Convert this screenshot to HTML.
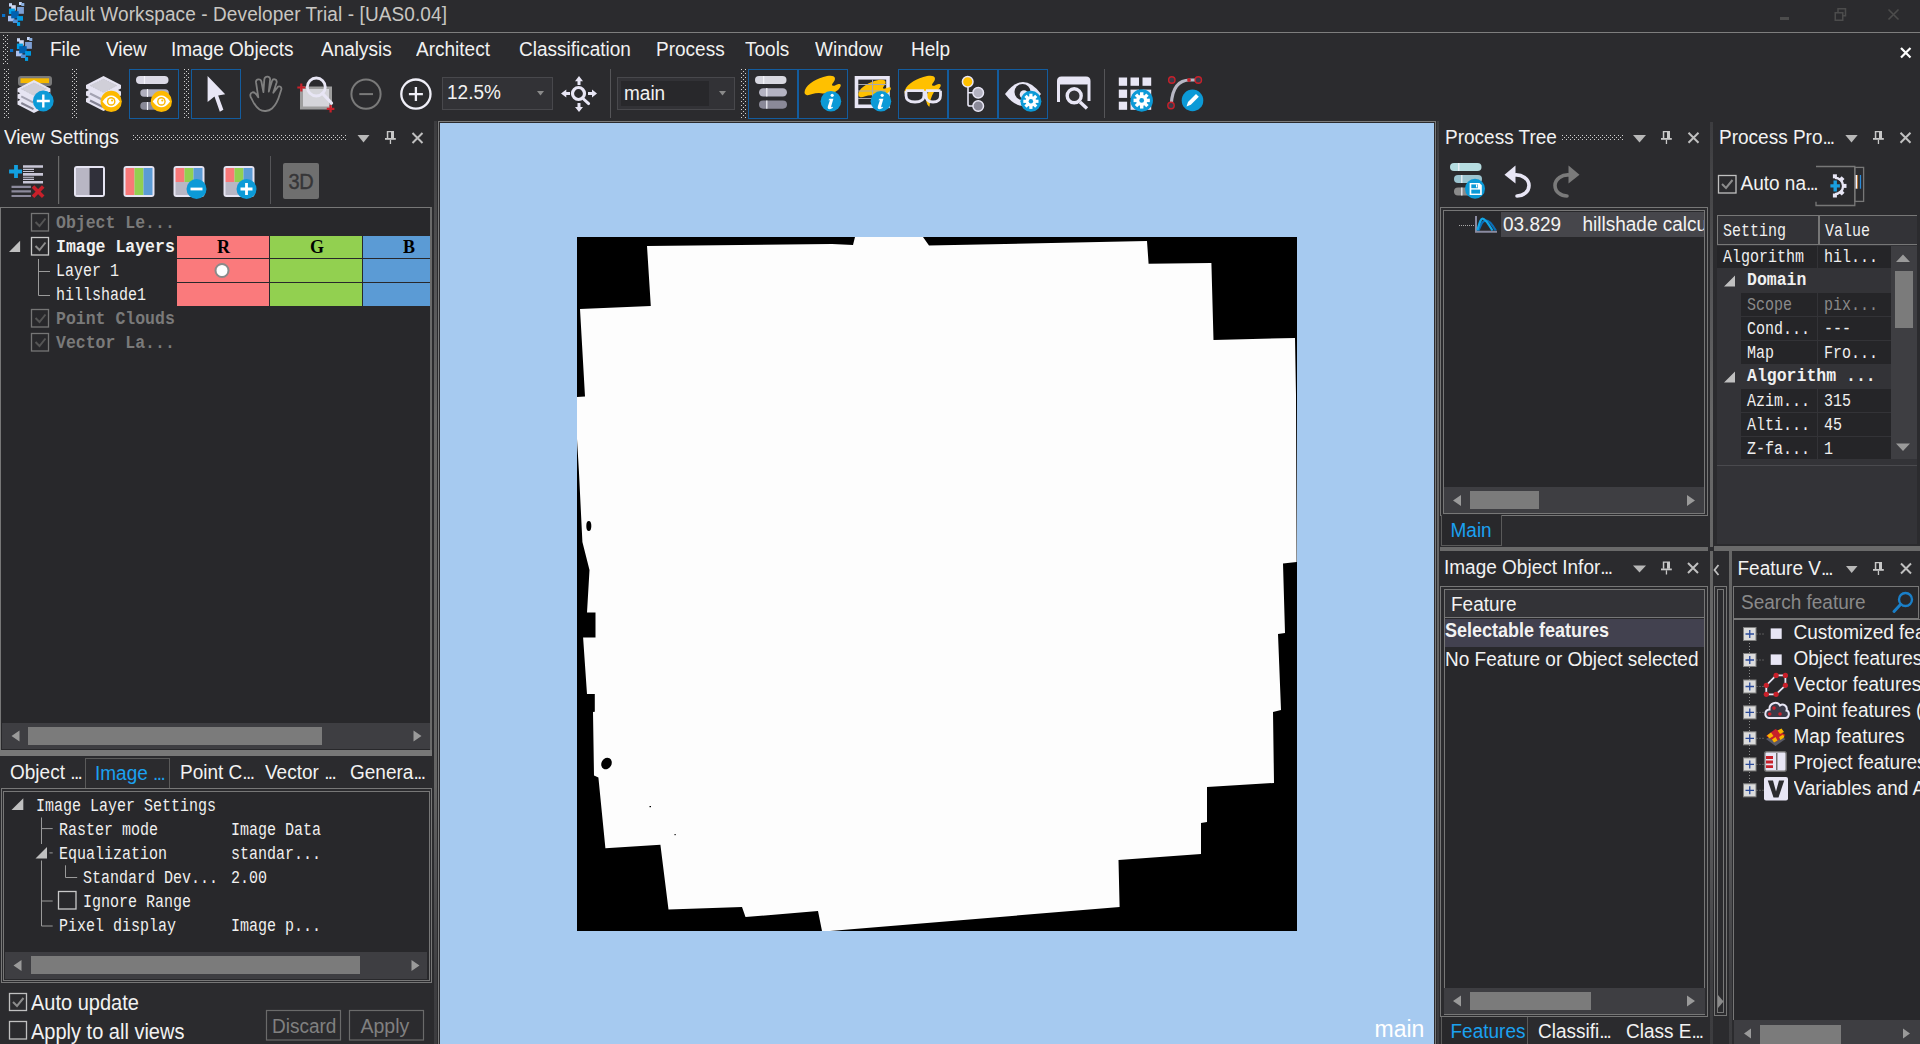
<!DOCTYPE html>
<html><head><meta charset="utf-8">
<style>
*{margin:0;padding:0;box-sizing:border-box}
html,body{width:1920px;height:1044px;overflow:hidden;background:#2b2b2e}
body{position:relative;font-family:"Liberation Sans",sans-serif;color:#f2f2f2}
.a{position:absolute}
svg{position:absolute;overflow:visible}
.t{position:absolute;font-size:19px;line-height:19px;white-space:nowrap;color:#f2f2f2;transform:scaleY(1.08);transform-origin:0 84.67%}
.mo{position:absolute;font-family:"Liberation Mono",monospace;font-size:16.5px;line-height:16.5px;white-space:nowrap;color:#f0f0f0;transform:translateY(1.5px) scale(0.909,1.1);transform-origin:0 76.6%}
.bx{position:absolute;border:1px solid #757575}
.grip{position:absolute;background-image:radial-gradient(circle at 1px 1px,#8c8c8c 0.9px,transparent 1px);background-size:3px 3px}
.sbt{position:absolute;background:#3e3e42}
.thumb{position:absolute;background:#7b7b7b}
.tb{position:absolute;border:1px solid #135c9e}
.vs{position:absolute;background-image:linear-gradient(to bottom,#3c3c3f 0%,#4a4a4c 10%,#555557 18%,#686868 32%,#646464 72%,#555557 80%,#3e3e41 93%,#3c3c3f 100%);background-size:100% 923px;background-repeat:no-repeat}
.el{letter-spacing:-1.6px}

</style></head><body>
<svg style="left:0;top:0" width="0" height="0"><defs><pattern id="gp" width="4" height="4" patternUnits="userSpaceOnUse"><rect x="0" y="0" width="1" height="1" fill="#d4d4d4"/><rect x="2" y="2" width="1" height="1" fill="#d4d4d4"/></pattern></defs></svg>
<svg style="left:3px;top:35px" width="5" height="29"><rect width="5" height="29" fill="url(#gp)"/></svg>
<svg style="left:4px;top:69px" width="5" height="49"><rect width="5" height="49" fill="url(#gp)"/></svg>
<svg style="left:72px;top:69px" width="5" height="49"><rect width="5" height="49" fill="url(#gp)"/></svg>
<svg style="left:184px;top:69px" width="5" height="49"><rect width="5" height="49" fill="url(#gp)"/></svg>
<svg style="left:741px;top:69px" width="5" height="49"><rect width="5" height="49" fill="url(#gp)"/></svg>
<svg style="left:133px;top:135px" width="213" height="5"><rect width="213" height="5" fill="url(#gp)"/></svg>
<svg style="left:1562px;top:135px" width="61" height="5"><rect width="61" height="5" fill="url(#gp)"/></svg>
<!-- TITLE BAR -->
<svg style="left:0;top:0" width="30" height="30">
 <rect x="2" y="14" width="3.2" height="3" fill="#0a70c8"/>
 <rect x="9" y="3.2" width="3" height="3.4" fill="#c8d8f8"/><rect x="11.2" y="5.2" width="4.6" height="5.4" fill="#d0d8f0"/>
 <rect x="19" y="2" width="2.8" height="3" fill="#c8d8f8"/><rect x="21.3" y="3" width="3" height="3" fill="#88aee0"/>
 <rect x="17.1" y="7" width="6.8" height="6.8" fill="#7ea0d6"/>
 <rect x="8.9" y="8.6" width="6" height="5.5" fill="#00a0e8"/>
 <rect x="8" y="15.8" width="6.4" height="5.5" fill="#a8c0f0"/>
 <rect x="11.2" y="11.2" width="7.5" height="7.2" fill="#0060b0"/>
 <rect x="17.1" y="16.1" width="5.9" height="4.6" fill="#0098e0"/>
 <rect x="12.9" y="19.5" width="4.9" height="3.5" fill="#5090d8"/>
 <rect x="17" y="22.1" width="3.1" height="3.8" fill="#00a0e8"/>
</svg>
<div class="t" style="left:34px;top:5px;color:#c8c6c2;letter-spacing:0.1px">Default Workspace - Developer Trial - [UAS0.04]</div>
<div class="a" style="left:1780px;top:17px;width:9px;height:3px;background:#4c4c4c"></div>
<svg style="left:1830px;top:4px" width="24" height="22"><rect x="8" y="4.75" width="7.5" height="7" fill="none" stroke="#4c4c4c" stroke-width="1.5"/><rect x="5.25" y="8.75" width="7.5" height="7.5" fill="#2b2b2e" stroke="#4c4c4c" stroke-width="1.5"/></svg>
<svg style="left:1884px;top:5px" width="20" height="20"><path d="M4.5 4.5 L14.5 14.5 M14.5 4.5 L4.5 14.5" stroke="#4c4c4c" stroke-width="1.6"/></svg>
<div class="a" style="left:0;top:32px;width:1920px;height:1px;background:#7e7e7e"></div>

<!-- MENU BAR -->
<svg style="left:8px;top:35px" width="30" height="30">
 <rect x="2" y="14" width="3.2" height="3" fill="#0a70c8"/>
 <rect x="9" y="3.2" width="3" height="3.4" fill="#c8d8f8"/><rect x="11.2" y="5.2" width="4.6" height="5.4" fill="#d0d8f0"/>
 <rect x="19" y="2" width="2.8" height="3" fill="#c8d8f8"/><rect x="21.3" y="3" width="3" height="3" fill="#88aee0"/>
 <rect x="17.1" y="7" width="6.8" height="6.8" fill="#7ea0d6"/>
 <rect x="8.9" y="8.6" width="6" height="5.5" fill="#00a0e8"/>
 <rect x="8" y="15.8" width="6.4" height="5.5" fill="#a8c0f0"/>
 <rect x="11.2" y="11.2" width="7.5" height="7.2" fill="#0060b0"/>
 <rect x="17.1" y="16.1" width="5.9" height="4.6" fill="#0098e0"/>
 <rect x="12.9" y="19.5" width="4.9" height="3.5" fill="#5090d8"/>
 <rect x="17" y="22.1" width="3.1" height="3.8" fill="#00a0e8"/>
</svg>
<div class="t" style="left:50px;top:40px">File</div>
<div class="t" style="left:106px;top:40px">View</div>
<div class="t" style="left:171px;top:40px">Image Objects</div>
<div class="t" style="left:321px;top:40px">Analysis</div>
<div class="t" style="left:416px;top:40px">Architect</div>
<div class="t" style="left:519px;top:40px">Classification</div>
<div class="t" style="left:656px;top:40px">Process</div>
<div class="t" style="left:745px;top:40px">Tools</div>
<div class="t" style="left:815px;top:40px">Window</div>
<div class="t" style="left:911px;top:40px">Help</div>
<svg style="left:1896px;top:43px" width="20" height="20"><path d="M5 5 L14.5 14.5 M14.5 5 L5 14.5" stroke="#ffffff" stroke-width="2.2"/></svg>
<!-- TOOLBAR -->
<div class="tb" style="left:129px;top:69px;width:50px;height:50px"></div>
<div class="tb" style="left:191px;top:69px;width:50px;height:50px"></div>
<div class="tb" style="left:748px;top:69px;width:50px;height:50px"></div>
<div class="tb" style="left:798px;top:69px;width:50px;height:50px"></div>
<div class="tb" style="left:898px;top:69px;width:50px;height:50px"></div>
<div class="tb" style="left:948px;top:69px;width:50px;height:50px"></div>
<div class="tb" style="left:998px;top:69px;width:50px;height:50px"></div>
<div class="a" style="left:610px;top:69px;width:1px;height:49px;background:#555558"></div>
<div class="a" style="left:1104px;top:69px;width:1px;height:49px;background:#555558"></div>
<!-- zoom combo -->
<div class="a" style="left:442px;top:77px;width:111px;height:33px;border:1px solid #48484c;background:#323236"></div>
<div class="t" style="left:447px;top:83px;font-size:19px">12.5%</div>
<svg style="left:534px;top:89px" width="12" height="8"><path d="M3 2 L10 2 L6.5 6.5Z" fill="#8a8a8a"/></svg>
<!-- main combo -->
<div class="a" style="left:617px;top:77px;width:118px;height:33px;border:1px solid #48484c;background:#323236"></div>
<div class="a" style="left:621px;top:81px;width:88px;height:25px;background:#28282b"></div>
<div class="t" style="left:624px;top:84px;font-size:19px">main</div>
<svg style="left:716px;top:89px" width="12" height="8"><path d="M3 2 L10 2 L6.5 6.5Z" fill="#8a8a8a"/></svg>
<!-- toolbar icons -->
<svg style="left:0;top:0" width="1220" height="125">
 <defs>
  <g id="stack">
   <path d="M0 15 L17.5 6 L35 15 L35 19 L17.5 28 L0 19Z" fill="#e6e4f2"/>
   <path d="M3 17 L17.5 10 L32 17 L17.5 24Z" fill="#9d9ca8"/>
   <path d="M0 9 L17.5 0 L35 9 L35 13 L17.5 22 L0 13Z" fill="#e6e4f2" transform="translate(0,0)"/>
  </g>
  <g id="eyeb">
   <circle cx="0" cy="0" r="10.6" fill="#fdb900"/>
   <path d="M-8.7 0 Q0 -11.8 8.7 0 Q0 11.8 -8.7 0Z" fill="#fff"/>
   <circle cx="0" cy="0" r="4.3" fill="#fdb900"/><circle cx="0" cy="0" r="2.9" fill="#fff"/><circle cx="0.9" cy="-0.9" r="1.1" fill="#fdb900"/>
  </g>
  <g id="infob">
   <circle cx="0" cy="0" r="10.3" fill="#0c9ad7"/>
   <circle cx="1.3" cy="-6" r="1.6" fill="#fff"/>
   <path d="M-1.5 -2.5 L2.5 -2.5 L0.3 5 Q0 6.5 2 5.5 L1.8 6.8 Q-1 8.5 -2.8 7.5 Q-3.5 6.5 -3 5 L-1 -1 L-2.5 -1Z" fill="#fff"/>
  </g>
  <g id="gearb">
   <circle cx="0" cy="0" r="10.5" fill="#0c9ad7"/>
   <g fill="#fff"><circle r="5.2"/>
    <rect x="-1.6" y="-7.6" width="3.2" height="15.2"/><rect x="-1.6" y="-7.6" width="3.2" height="15.2" transform="rotate(45)"/>
    <rect x="-1.6" y="-7.6" width="3.2" height="15.2" transform="rotate(90)"/><rect x="-1.6" y="-7.6" width="3.2" height="15.2" transform="rotate(135)"/>
   </g>
   <circle r="2.2" fill="#0c9ad7"/>
  </g>
  <path id="blob" d="M0 14 C2 8 12 2 22 0 C30 -1.5 32 2 28 7 C26 9 27 11 31 9 C37 6 37 10 33 14 C28 18 22 18 14 17 C8 17 4 20 1.5 19 C-1 18 -0.5 16 0 14Z"/>
 </defs>
 <!-- icon1 new project -->
 <rect x="18" y="76" width="34" height="10" rx="3" fill="#7a7a7a"/>
 <rect x="20.5" y="78.3" width="28.5" height="4.8" fill="#f5b800"/>
 <g transform="translate(17.5,80) scale(0.94)">
  <path d="M0 9 L17.5 0 L35 9 L35 26 L17.5 35 L0 26Z" fill="#e6e4f2"/>
  <path d="M0 12.5 L3 14 L0 15.5Z M35 12.5 L32 14 L35 15.5Z M0 19.5 L3 21 L0 22.5Z M35 19.5 L32 21 L35 22.5Z" fill="#2b2b2e"/>
  <path d="M4 17.5 L17 24" stroke="#a4a3b2" stroke-width="2.2"/>
  <path d="M4 24.5 L17 31" stroke="#858494" stroke-width="2.2"/>
  <path d="M4 9.5 L17.5 3 L31 9.5 L17.5 16.5Z" fill="#d0cfd8" stroke="#b8b7c4" stroke-width="0.6" stroke-dasharray="1 1"/>
 </g>
 <circle cx="43.3" cy="101" r="10.4" fill="#0c9ad7"/>
 <path d="M43.3 94.5 V107.5 M36.8 101 H49.8" stroke="#fff" stroke-width="2.4"/>
 <!-- icon2 layers eye -->
 <g transform="translate(86,76)">
  <path d="M0 9 L17.5 0 L35 9 L35 26 L17.5 35 L0 26Z" fill="#e6e4f2"/>
  <path d="M0 12.5 L3 14 L0 15.5Z M35 12.5 L32 14 L35 15.5Z M0 19.5 L3 21 L0 22.5Z M35 19.5 L32 21 L35 22.5Z" fill="#2b2b2e"/>
  <path d="M4 17.5 L17 24" stroke="#a4a3b2" stroke-width="2.2"/>
  <path d="M4 24.5 L17 31" stroke="#858494" stroke-width="2.2"/>
  <path d="M4 9.5 L17.5 3 L31 9.5 L17.5 16.5Z" fill="#d0cfd8" stroke="#b8b7c4" stroke-width="0.6" stroke-dasharray="1 1"/>
 </g>
 <use href="#eyeb" x="111.2" y="101.4"/>
 <!-- icon3 process tree eye -->
 <rect x="136" y="76" width="32.5" height="8" rx="4" fill="#dcdae6"/>
 <rect x="140.3" y="89.2" width="28.5" height="7.5" rx="3.7" fill="#b0afbe"/>
 <rect x="140.3" y="102" width="28.5" height="7.8" rx="3.8" fill="#888896"/>
 <path d="M144.5 76 V84 M147.5 89 V97 M147.5 102 V110" stroke="#f4f4fa" stroke-width="1.2"/>
 <use href="#eyeb" x="161.4" y="101.4"/>
 <!-- pointer -->
 <path d="M207.6 76 L207.6 102 L214.5 96.5 L219.8 111.7 L223.4 109.8 L218.2 95.4 L225.2 94.2Z" fill="#e8e6f5"/>
 <!-- hand -->
 <path d="M258.3 97.3 C256.5 94 254.5 92 252.5 92.3 C249.5 93 250 96.5 251.5 98.5 C253 102 256 107 259.5 109.5 C263 111.8 268.5 111.5 272 108.5 C276 105 278.5 99 280 93.5 L281.3 89.5 C282 86.5 278.5 85 277 88 L273.3 92.8 L276.6 82.5 C277.3 79.2 273 78 272 81 L268.8 91.6 L270.1 79.5 C270.4 76 264.8 75.6 264.3 79.5 L263.4 92.1 L261.4 81.5 C260.8 78.5 255.6 78.5 256 82.2 Z" fill="none" stroke="#808080" stroke-width="1.8" stroke-linejoin="round"/>
 <!-- zoom rect -->
 <rect x="300" y="86.5" width="32" height="23" fill="#9e9e9e"/>
 <rect x="303" y="89" width="26" height="17.5" fill="#d5d5da"/>
 <circle cx="316.3" cy="87" r="9" fill="#2b2b2e" fill-opacity="0" stroke="#e8e6f5" stroke-width="2.8"/>
 <path d="M322.5 93.5 L331.5 103" stroke="#e8e6f5" stroke-width="3.2" stroke-linecap="round"/>
 <path d="M301.3 83.5 V91.5 M297.3 87.5 H305.3 M330.6 105 V112.5 M326.8 108.8 H334.4" stroke="#c8202a" stroke-width="2.2"/>
 <!-- minus circle -->
 <circle cx="366" cy="94.1" r="14.6" fill="none" stroke="#7a7a7a" stroke-width="2"/>
 <path d="M359.3 94.1 H373" stroke="#7a7a7a" stroke-width="2"/>
 <!-- plus circle -->
 <circle cx="415.9" cy="94.1" r="14.6" fill="none" stroke="#f0eff8" stroke-width="2.3"/>
 <path d="M408.9 94.1 H422.9 M415.9 87.1 V101.1" stroke="#f0eff8" stroke-width="2.3"/>
 <!-- pan zoom -->
 <circle cx="578.5" cy="93.5" r="6" fill="none" stroke="#e8e6f5" stroke-width="3.2"/>
 <path d="M583.5 99 L588.6 103.6" stroke="#e8e6f5" stroke-width="3" stroke-linecap="round"/>
 <path d="M579 76 L583 81.3 L575 81.3Z M579 112 L583 107 L575 107Z M561 93.5 L566.3 89.5 L566.3 97.5Z M597 93.5 L592 89.5 L592 97.5Z" fill="#e8e6f5"/>
 <path d="M579 81 V85 M579 103 V107.5 M566 93.5 H570 M588 93.5 H592.5" stroke="#e8e6f5" stroke-width="3"/>
 <!-- tb icon: process tree -->
 <rect x="755" y="76" width="31.5" height="8" rx="4" fill="#d8d8e0"/>
 <rect x="759" y="88.2" width="28" height="8.4" rx="4.2" fill="#b4b3c2"/>
 <rect x="759" y="100.5" width="28" height="8.2" rx="4.1" fill="#8a8998"/>
 <path d="M763.7 76 V84 M766.8 88 V96.6 M766.8 100.5 V108.7" stroke="#f4f4fa" stroke-width="1.2"/>
 <!-- blob info -->
 <use href="#blob" x="805" y="76" fill="#ffc000"/>
 <use href="#infob" x="830.9" y="101.3"/>
 <!-- table blob info -->
 <rect x="856.5" y="77.8" width="31.5" height="28.5" fill="none" stroke="#e8e6f5" stroke-width="3.6"/>
 <use href="#blob" x="858.5" y="80" fill="#ffc000" transform="translate(86,8) scale(0.9)" />
 <path d="M858 84.5 H886 M858 91 H886 M858 98.5 H886 M872.5 79.5 V105" stroke="#a8a8b0" stroke-width="1"/>
 <use href="#infob" x="880.9" y="101.3"/>
 <!-- glasses -->
 <use href="#blob" x="905" y="76" fill="#ffc000"/>
 <path d="M907 92 H923 V95.5 C923 99.5 920.5 100.5 915 100.5 C909.5 100.5 907 99.5 907 95.5Z" fill="#2b2b2e"/>
 <path d="M927 92 H939.5 V95.5 C939.5 99.5 937 100.5 933 100.5 C929 100.5 927 99.5 927 95.5Z" fill="#2b2b2e"/>
 <path d="M934 92 C931 97 930 101 929.5 106.7 C927.5 106 926 102 926 98 C926 95 928 92 930 90Z" fill="#ffc000"/>
 <path d="M906 90.7 H924 M926 90.7 H940.5 M906 90.7 V95.5 C906 100.5 909.5 102 915 102 C920.5 102 924 100.5 924 95.5 V90.7 M926 90.7 V95.5 C926 100.5 929 102 933 102 C937.5 102 940.5 100.5 940.5 95.5 V90.7" fill="none" stroke="#e8e6f5" stroke-width="2.8"/>
 <!-- tree nodes -->
 <path d="M968 87 V104.5 Q968 106 970 106 H974 M968 92.7 H973" fill="none" stroke="#e8e6f5" stroke-width="1.6"/>
 <circle cx="967.7" cy="81.7" r="5.3" fill="#ffc000" stroke="#e8e6f5" stroke-width="1.5"/>
 <circle cx="978.2" cy="92.7" r="5.3" fill="#b4b3c2" stroke="#e8e6f5" stroke-width="1.5"/>
 <circle cx="978.2" cy="106" r="5.3" fill="#8a8998" stroke="#e8e6f5" stroke-width="1.5"/>
 <!-- eye gear -->
 <path d="M1005 94 Q1023 70 1041 94 Q1023 118 1005 94Z" fill="#e8e6f5"/>
 <circle cx="1022.5" cy="92" r="8" fill="#2b2b2e"/>
 <circle cx="1024" cy="94.5" r="4.3" fill="#e8e6f5"/>
 <use href="#gearb" x="1030.9" y="101.3"/>
 <!-- window magnifier -->
 <path d="M1058.5 102 V81 Q1058.5 78 1061.5 78 H1086 Q1089 78 1089 81 V101" fill="none" stroke="#e8e6f5" stroke-width="3"/>
 <rect x="1058" y="78" width="31" height="6.5" rx="2" fill="#e8e6f5"/>
 <circle cx="1074.2" cy="95.8" r="8.6" fill="#2b2b2e"/>
 <circle cx="1074.2" cy="95.8" r="7" fill="#333336" stroke="#e8e6f5" stroke-width="3.4"/>
 <path d="M1080 102 L1087 108.5" stroke="#e8e6f5" stroke-width="3.4"/>
 <!-- grid gear -->
 <g fill="#e8e6f5">
  <rect x="1118.8" y="77.5" width="8.3" height="8.3"/><rect x="1130.5" y="77.5" width="8.5" height="8.3"/><rect x="1142.5" y="77.5" width="8.7" height="8.3"/>
  <rect x="1118.8" y="89.6" width="8.3" height="8.3"/><rect x="1130.5" y="89.6" width="8.5" height="8.3"/><rect x="1142.5" y="89.6" width="8.7" height="8.3"/>
  <rect x="1118.8" y="101.7" width="8.3" height="8.1"/><rect x="1130.5" y="101.7" width="8.5" height="8.1"/><rect x="1142.5" y="101.7" width="8.7" height="8.1"/>
 </g>
 <g transform="translate(1141.7,100.4) scale(1.07)"><use href="#gearb"/></g>
 <!-- curve pen -->
 <path d="M1171.3 104 C1172 92 1176 80 1190 80 H1197" fill="none" stroke="#b8b7c4" stroke-width="3.2"/>
 <circle cx="1171.8" cy="80" r="3.2" fill="#3a3a48" stroke="#c8202a" stroke-width="1.4"/>
 <circle cx="1198.3" cy="80" r="3.2" fill="#3a3a48" stroke="#c8202a" stroke-width="1.4"/>
 <circle cx="1171" cy="105.5" r="3.2" fill="#3a3a48" stroke="#c8202a" stroke-width="1.4"/>
 <circle cx="1189" cy="80" r="1.9" fill="#c8202a"/>
 <circle cx="1192.5" cy="100.4" r="10.8" fill="#0c9ad7"/>
 <path d="M1186.5 106.5 L1188 102 L1196 94 L1198.8 96.8 L1190.8 104.8Z" fill="#fff"/>
</svg>
<!-- LEFT PANEL: VIEW SETTINGS -->
<div class="vs" style="left:434px;top:121px;width:3px;height:923px;background-position:0 0px"></div>
<div class="t" style="left:4px;top:128px">View Settings</div>
<svg style="left:0;top:120px" width="440" height="90">
 <path d="M357.5 15 H369.5 L363.5 22.5Z" fill="#b8b8b8"/>
 <g transform="translate(385,11)" fill="#c8c8c8"><path d="M1.8 0 H9 V7.2 H1.8Z M3.3 1.3 V7.2 H6 V1.3Z" fill-rule="evenodd"/><rect x="0" y="7" width="10.8" height="1.8"/><rect x="4.8" y="8.8" width="1.3" height="4.2"/></g>
 <path d="M412.5 13 L422.5 23 M422.5 13 L412.5 23" stroke="#c0c0c0" stroke-width="2"/>
 <!-- add/remove icon -->
 <path d="M16 45 V58 M9.1 51.5 H22" stroke="#12a0e0" stroke-width="3.8"/>
 <path d="M23 46.5 H43 M23 54.4 H43 M23 62.3 H43" stroke="#c8c6d6" stroke-width="2.6"/>
 <path d="M23 49.4 H34 M23 51.5 H34 M23 57.3 H34 M23 59.4 H34" stroke="#c8c6d6" stroke-width="1.1"/>
 <path d="M11.5 66.8 H30.9 M11.5 71.4 H30.9 M11.5 76 H30.9" stroke="#8c8a9c" stroke-width="2.2"/>
 <path d="M33 66.6 L43.2 76.8 M43.2 66.6 L33 76.8" stroke="#c8202a" stroke-width="3.6"/>
 <rect x="58" y="36" width="1.2" height="48" fill="#6a6a6a"/>
 <rect x="270" y="36" width="1" height="48" fill="#555558"/>
 <!-- icon 2 bw -->
 <rect x="74" y="46" width="31" height="31" rx="3" fill="#e6e4f2"/>
 <rect x="76" y="48" width="13.5" height="27" fill="#b8b6c4"/><rect x="89.5" y="48" width="13.5" height="27" fill="#30303a"/>
 <!-- icon 3 rgb -->
 <rect x="123.5" y="46" width="31" height="31" rx="3" fill="#e6e4f2"/>
 <rect x="125.5" y="48" width="9" height="27" fill="#f87878"/><rect x="134.5" y="48" width="9" height="27" fill="#92d050"/><rect x="143.5" y="48" width="9" height="27" fill="#5b9bd5"/>
 <!-- icon 4 rgb minus -->
 <rect x="173.5" y="46" width="31" height="31" rx="3" fill="#e6e4f2"/>
 <rect x="175.5" y="48" width="9" height="14" fill="#f87878"/><rect x="184.5" y="48" width="9" height="14" fill="#92d050"/><rect x="193.5" y="48" width="9" height="14" fill="#5b9bd5"/>
 <rect x="175.5" y="62" width="27" height="13" fill="#b8b6c4"/>
 <circle cx="196.5" cy="69" r="10" fill="#0c9ad7"/><path d="M190.5 69 H202.5" stroke="#fff" stroke-width="2.8"/>
 <!-- icon 5 rgb plus -->
 <rect x="223.5" y="46" width="31" height="31" rx="3" fill="#e6e4f2"/>
 <rect x="225.5" y="48" width="9" height="14" fill="#f87878"/><rect x="234.5" y="48" width="9" height="14" fill="#92d050"/><rect x="243.5" y="48" width="9" height="14" fill="#5b9bd5"/>
 <rect x="225.5" y="62" width="27" height="13" fill="#b8b6c4"/>
 <circle cx="246.5" cy="69" r="10" fill="#0c9ad7"/><path d="M240.5 69 H252.5 M246.5 63 V75" stroke="#fff" stroke-width="2.8"/>
 <!-- 3D -->
 <rect x="283" y="43" width="36" height="36" rx="2" fill="#6f6f6f"/>
</svg>
<div class="t" style="left:288.5px;top:172px;font-size:20px;line-height:20px;color:#363638;letter-spacing:-0.3px;-webkit-text-stroke:0.4px #363638">3D</div>

<!-- tree -->
<div class="a" style="left:0;top:207px;width:432px;height:544px;border:1.5px solid #777;border-right:2px solid #6a6a6a;background:#28282b"></div>
<!-- RGB cells -->
<div class="a" style="left:177px;top:236px;width:92px;height:22px;background:#fa7a7c"></div>
<div class="a" style="left:270px;top:236px;width:92px;height:22px;background:#92d050"></div>
<div class="a" style="left:363px;top:236px;width:67px;height:22px;background:#5b9bd5"></div>
<div class="a" style="left:177px;top:259px;width:92px;height:23px;background:#fa7a7c"></div>
<div class="a" style="left:270px;top:259px;width:92px;height:23px;background:#92d050"></div>
<div class="a" style="left:363px;top:259px;width:67px;height:23px;background:#5b9bd5"></div>
<div class="a" style="left:177px;top:283px;width:92px;height:23px;background:#fa7a7c"></div>
<div class="a" style="left:270px;top:283px;width:92px;height:23px;background:#92d050"></div>
<div class="a" style="left:363px;top:283px;width:67px;height:23px;background:#5b9bd5"></div>
<div class="t" style="left:217px;top:238px;font-family:'Liberation Serif';font-weight:bold;font-size:18px;line-height:18px;color:#000">R</div>
<div class="t" style="left:310px;top:238px;font-family:'Liberation Serif';font-weight:bold;font-size:18px;line-height:18px;color:#000">G</div>
<div class="t" style="left:403px;top:238px;font-family:'Liberation Serif';font-weight:bold;font-size:18px;line-height:18px;color:#000">B</div>
<svg style="left:0;top:200px" width="440" height="160">
 <circle cx="222" cy="70.5" r="6.5" fill="#fff" stroke="#8a8a8a" stroke-width="2"/>
 <!-- checkboxes -->
 <rect x="31.5" y="13.5" width="17" height="17.5" fill="none" stroke="#757575" stroke-width="1.3"/>
 <path d="M35.5 22 L39.5 26 L45.5 18.5" fill="none" stroke="#555" stroke-width="2"/>
 <rect x="31.5" y="37.5" width="17" height="17.5" fill="none" stroke="#c8c8c8" stroke-width="1.3"/>
 <path d="M35.5 46 L39.5 50 L45.5 42.5" fill="none" stroke="#8c8c8c" stroke-width="2"/>
 <rect x="31.5" y="109.5" width="17" height="17.5" fill="none" stroke="#757575" stroke-width="1.3"/>
 <path d="M35.5 118 L39.5 122 L45.5 114.5" fill="none" stroke="#555" stroke-width="2"/>
 <rect x="31.5" y="133.5" width="17" height="17.5" fill="none" stroke="#757575" stroke-width="1.3"/>
 <path d="M35.5 142 L39.5 146 L45.5 138.5" fill="none" stroke="#555" stroke-width="2"/>
 <path d="M9 52 H20.1 V40.8Z" fill="#c0c0c0"/>
 <path d="M38.5 59 V95.5 H50 M38.5 71.5 H50" fill="none" stroke="#9a9a9a" stroke-width="1"/>
</svg>
<div class="mo" style="left:56px;top:215px;color:#7a7a7a;font-weight:bold;transform:translateY(1.5px) scaleY(1.1)">Object Le...</div>
<div class="mo" style="left:56px;top:239px;font-weight:bold;transform:translateY(1.5px) scaleY(1.1)">Image Layers</div>
<div class="mo" style="left:56px;top:263px">Layer 1</div>
<div class="mo" style="left:56px;top:287px">hillshade1</div>
<div class="mo" style="left:56px;top:311px;color:#7a7a7a;font-weight:bold;transform:translateY(1.5px) scaleY(1.1)">Point Clouds</div>
<div class="mo" style="left:56px;top:335px;color:#7a7a7a;font-weight:bold;transform:translateY(1.5px) scaleY(1.1)">Vector La...</div>
<!-- tree h scrollbar -->
<div class="sbt" style="left:2px;top:723px;width:428px;height:26px"></div>
<div class="thumb" style="left:28px;top:727px;width:294px;height:18px"></div>
<svg style="left:0;top:720px" width="440" height="32"><path d="M11.5 16 L19.5 10.5 V21.5Z M421.5 16 L413.5 10.5 V21.5Z" fill="#9a9a9a"/></svg>
<!-- splitter -->
<div class="a" style="left:0;top:750px;width:432px;height:6px;background:#787878"></div>
<!-- tabs -->
<div class="a" style="left:85px;top:758px;width:85px;height:31px;border:1px solid #5a5a5a;border-bottom:none;background:#2b2b2e"></div>
<div class="t" style="left:10px;top:763px">Object <span class="el">...</span></div>
<div class="t" style="left:95px;top:764px;color:#1ba1f0">Image <span class="el">...</span></div>
<div class="t" style="left:180px;top:763px">Point C<span class="el">...</span></div>
<div class="t" style="left:265px;top:763px">Vector <span class="el">...</span></div>
<div class="t" style="left:350px;top:763px">Genera<span class="el">...</span></div>
<!-- properties box -->
<div class="a" style="left:1px;top:788px;width:431px;height:195px;border:1.5px solid #777777;background:#2b2b2e"></div>
<div class="a" style="left:3px;top:790.5px;width:427px;height:190.5px;border:1.5px solid #777777;background:#28282b"></div>
<svg style="left:0;top:780px" width="440" height="160">
 <path d="M11.5 30 H23.3 V18.2Z" fill="#c0c0c0"/>
 <path d="M41.5 37.5 V64 M41.5 48.6 H52.7 M41.5 80.5 V146 H52.7 M41.5 121 H52.7" fill="none" stroke="#9a9a9a" stroke-width="1"/>
 <path d="M35.5 78.5 H47 V67Z" fill="#c0c0c0"/><path d="M49.4 72.9 H52.7" stroke="#9a9a9a" stroke-width="1"/>
 <path d="M65.5 85.3 V97.5 H77.2" fill="none" stroke="#9a9a9a" stroke-width="1"/>
 <rect x="58.5" y="111.5" width="17.5" height="17.5" fill="none" stroke="#c8c8c8" stroke-width="1.3"/>
</svg>
<div class="mo" style="left:36px;top:798px">Image Layer Settings</div>
<div class="mo" style="left:59px;top:822px">Raster mode</div>
<div class="mo" style="left:231px;top:822px">Image Data</div>
<div class="mo" style="left:59px;top:846px">Equalization</div>
<div class="mo" style="left:231px;top:846px">standar...</div>
<div class="mo" style="left:83px;top:870px">Standard Dev...</div>
<div class="mo" style="left:231px;top:870px">2.00</div>
<div class="mo" style="left:83px;top:894px">Ignore Range</div>
<div class="mo" style="left:59px;top:918px">Pixel display</div>
<div class="mo" style="left:231px;top:918px">Image p...</div>
<!-- props scrollbar -->
<div class="sbt" style="left:5px;top:952px;width:422px;height:27px"></div>
<div class="thumb" style="left:31px;top:956px;width:329px;height:18px"></div>
<svg style="left:0;top:950px" width="440" height="32"><path d="M13.5 15.5 L21.5 10 V21Z M419.5 15.5 L411.5 10 V21Z" fill="#9a9a9a"/></svg>
<!-- bottom checkboxes/buttons -->
<svg style="left:0;top:985px" width="440" height="60">
 <rect x="9.5" y="8.5" width="17" height="17" fill="none" stroke="#c0c0c0" stroke-width="1.3"/>
 <path d="M13 17 L17 21 L23.5 13" fill="none" stroke="#8c8c8c" stroke-width="2"/>
 <rect x="9.5" y="36.5" width="17" height="17.5" fill="none" stroke="#c0c0c0" stroke-width="1.3"/>
 <rect x="266.5" y="25.5" width="74" height="29.5" fill="none" stroke="#6a6a6a" stroke-width="1.2"/>
 <rect x="349.5" y="25.5" width="74" height="29.5" fill="none" stroke="#6a6a6a" stroke-width="1.2"/>
</svg>
<div class="t" style="left:31px;top:993px;font-size:20px;line-height:20px">Auto update</div>
<div class="t" style="left:31px;top:1022px;font-size:20px;line-height:20px">Apply to all views</div>
<div class="t" style="left:272px;top:1017px;font-size:19px;line-height:19px;color:#808080">Discard</div>
<div class="t" style="left:360.5px;top:1017px;font-size:19.5px;line-height:19.5px;color:#808080">Apply</div>
<!-- VIEW AREA -->
<div class="a" style="left:438px;top:121px;width:998px;height:923px;border:1px solid #7a7a7a;border-bottom:none;background:#a6caf0;box-shadow:inset 1px 1px 0 #2b2b2e,inset -1px 0 0 #2b2b2e"></div>
<div class="vs" style="left:1437px;top:121px;width:2px;height:923px;background-position:0 0px"></div>
<svg style="left:0;top:0" width="1440" height="1044">
 <rect x="577" y="237" width="720" height="694" fill="#000"/>
 <path fill="#fdfdfd" d="M647 246 L832 244 L853 245 L855 237 L923 237 L929 245.5 L1147 241 L1148.6 263.7 L1211.4 263 L1213.5 340 L1295 338 L1296 395 L1296.6 562 L1283 563.5 L1285 633 L1278 634 L1281 710 L1273 712 L1274 783 L1207 787 L1207 822 L1201 823 L1201 854 L1118.5 860 L1119.6 907 L830 931 L822 931 L818 911 L745.5 917 L742 907 L668.5 909.6 L660.4 844.7 L605.4 848.3 L598.4 777.4 L594 775.6 L593 712 L594.8 711.8 L594.8 694 L587 694 L583.1 637.4 L595.5 637.4 L595.5 612.5 L587 612.5 L589.5 570 L582.4 542 L578.9 471 L577 439 L577 397 L585 396.6 L580 309 L650.8 306 Z"/>
 <ellipse cx="606.5" cy="763.5" rx="5" ry="6" transform="rotate(30 606.5 763.5)" fill="#000"/>
 <ellipse cx="588.8" cy="526" rx="2.5" ry="5" fill="#000"/>
 <rect x="649.5" y="806" width="1.5" height="1.2" fill="#000"/><rect x="674.5" y="834" width="1.2" height="1.2" fill="#000"/>
</svg>
<div class="t" style="left:1374.5px;top:1017.6px;font-size:23px;line-height:23px;color:#fff">main</div>
<!-- PROCESS TREE -->
<div class="t" style="left:1445px;top:128px">Process Tree</div>
<svg style="left:1420px;top:120px" width="300" height="90">
 <path d="M213 15 H226 L219.5 22.6Z" fill="#b8b8b8"/>
 <g transform="translate(241,11)" fill="#c8c8c8"><path d="M1.8 0 H9 V7.2 H1.8Z M3.3 1.3 V7.2 H6 V1.3Z" fill-rule="evenodd"/><rect x="0" y="7" width="10.8" height="1.8"/><rect x="4.8" y="8.8" width="1.3" height="4.2"/></g>
 <path d="M268.5 12.8 L278.5 22.8 M278.5 12.8 L268.5 22.8" stroke="#c0c0c0" stroke-width="2"/>
 <!-- icon save tree -->
 <rect x="30" y="43" width="31.5" height="8" rx="4" fill="#b5dce0"/>
 <rect x="34" y="55" width="28" height="8" rx="4" fill="#9cc4d0"/>
 <rect x="34" y="67.5" width="28" height="8" rx="4" fill="#8a8a8a"/>
 <path d="M38.8 43 V51 M41.8 55 V63 M41.8 67.5 V75.5" stroke="#f4f4fa" stroke-width="1.2"/>
 <circle cx="55" cy="68.8" r="10" fill="#0c9ad7"/>
 <path d="M49.6 62.9 H59.5 L61.8 65.2 V75 H49.6Z" fill="#fff"/>
 <rect x="51.3" y="64.4" width="6.5" height="3.8" fill="#0c9ad7"/><rect x="56" y="64.4" width="1.2" height="3" fill="#fff"/>
 <rect x="51.3" y="69.6" width="8.8" height="4" fill="#0c9ad7"/>
 <!-- undo -->
 <path d="M94 55 C102 54 109 59 109 65.5 C109 72 103 76 97 76" fill="none" stroke="#e8e6f5" stroke-width="3.6" stroke-linecap="round"/>
 <path d="M84.5 54.7 L95.5 45.5 L95.5 63.5Z" fill="#e8e6f5"/>
 <!-- redo -->
 <path d="M150 55 C142 54 135 59 135 65.5 C135 72 141 76 147 76" fill="none" stroke="#7a7a7a" stroke-width="3.6" stroke-linecap="round"/>
 <path d="M159.5 54.7 L148.5 45.5 L148.5 63.5Z" fill="#7a7a7a"/>
</svg>
<!-- tree box -->
<div class="a" style="left:1440px;top:207px;width:268px;height:309px;border:1px solid #777777;background:#2b2b2e"></div>
<div class="a" style="left:1443px;top:210px;width:262px;height:304px;border:1px solid #777777;background:#28282b"></div>
<div class="a" style="left:1501px;top:212px;width:203px;height:25px;background:#46464b"></div>
<svg style="left:1440px;top:205px" width="270" height="40"><rect x="19" y="20" width="1" height="1" fill="#a8a8a8"/><rect x="21" y="20" width="1" height="1" fill="#a8a8a8"/><rect x="23" y="20" width="1" height="1" fill="#a8a8a8"/><rect x="25" y="20" width="1" height="1" fill="#a8a8a8"/><rect x="27" y="20" width="1" height="1" fill="#a8a8a8"/><rect x="29" y="20" width="1" height="1" fill="#a8a8a8"/><rect x="31" y="20" width="1" height="1" fill="#a8a8a8"/><rect x="33" y="20" width="1" height="1" fill="#a8a8a8"/>
 <path d="M36 11 V26.8 H57" fill="none" stroke="#8a8aa0" stroke-width="2"/>
 <path d="M38.5 25.5 C42 17 43 15.6 46.6 15.6 C49.5 15.6 52 19 55.8 25.5" fill="none" stroke="#0a6eb8" stroke-width="2.2"/>
 <path d="M37.3 25.5 C40 16 41 13.6 42.6 13.6 C45 13.6 48 18 52.5 25.5" fill="none" stroke="#12a6e6" stroke-width="2.2"/>
</svg>
<div class="t" style="left:1503px;top:215px">03.829</div>
<div class="t" style="left:1582.5px;top:215px;width:121px;overflow:hidden">hillshade calculation</div>
<div class="sbt" style="left:1444px;top:487px;width:260px;height:26px"></div>
<div class="thumb" style="left:1470px;top:491px;width:69px;height:18px"></div>
<svg style="left:1440px;top:485px" width="270" height="32"><path d="M13 15.5 L21 10 V21Z M255 15.5 L247 10 V21Z" fill="#9a9a9a"/></svg>
<!-- Main tab -->
<div class="a" style="left:1441px;top:515px;width:61px;height:31px;border:1px solid #5a5a5a;border-top:none;background:#28282b"></div>
<div class="t" style="left:1450.5px;top:521px;color:#1ba1f0">Main</div>
<div class="a" style="left:1440px;top:547px;width:268px;height:4px;background:#6a6a6a"></div>
<div class="vs" style="left:1710px;top:122px;width:3px;height:425px;background-position:0 -1px"></div>

<!-- PROCESS PROPERTIES -->
<div class="t" style="left:1719px;top:127.5px">Process Pro<span class="el">...</span></div>
<svg style="left:1700px;top:120px" width="220" height="90">
 <path d="M145.3 15 H157.7 L151.5 22.4Z" fill="#b8b8b8"/>
 <g transform="translate(173,11)" fill="#c8c8c8"><path d="M1.8 0 H9 V7.2 H1.8Z M3.3 1.3 V7.2 H6 V1.3Z" fill-rule="evenodd"/><rect x="0" y="7" width="10.8" height="1.8"/><rect x="4.8" y="8.8" width="1.3" height="4.2"/></g>
 <path d="M200.5 12.8 L210.5 22.8 M210.5 12.8 L200.5 22.8" stroke="#c0c0c0" stroke-width="2"/>
 <rect x="18.5" y="55.5" width="17.5" height="17.5" fill="none" stroke="#c0c0c0" stroke-width="1.3"/>
 <path d="M22 64 L26 68 L32.5 60" fill="none" stroke="#8c8c8c" stroke-width="2"/>
 <path d="M116 46.5 H154.8 V85.5 H116 V81.7" fill="none" stroke="#777" stroke-width="1.3"/>
 <rect x="154.8" y="47.4" width="8.8" height="34" fill="none" stroke="#777" stroke-width="1.3"/>
 <rect x="155.6" y="55" width="1.6" height="13.7" fill="#f4f4ff"/><rect x="157.2" y="55" width="0.9" height="13.7" fill="#d08030"/><rect x="159.8" y="55" width="1.3" height="13.7" fill="#2a8ad8"/>
 <g transform="translate(134.9,65.9)">
  <path d="M0 -8.2 A8.2 8.2 0 0 1 0 8.2" fill="none" stroke="#e8e6f5" stroke-width="2.4"/>
  <g fill="#e8e6f5">
   <rect x="-2" y="-11.6" width="4" height="4"/>
   <rect x="-2" y="-11.6" width="4" height="4" transform="rotate(45)"/>
   <rect x="-2" y="-11.6" width="4" height="4" transform="rotate(90)"/>
   <rect x="-2" y="-11.6" width="4" height="4" transform="rotate(135)"/>
   <rect x="-2" y="-11.6" width="4" height="4" transform="rotate(180)"/>
  </g>
  <path d="M-4.5 0 H5 M0.3 -5.4 V5.6" stroke="#1aa0e0" stroke-width="3.4"/>
 </g>
</svg>
<div class="t" style="left:1740.5px;top:174px">Auto na<span class="el">...</span></div>
<!-- property grid -->
<div class="a" style="left:1717px;top:215px;width:200px;height:329px;background:#333337"></div>
<div class="a" style="left:1717px;top:215px;width:200px;height:30px;border:1px solid #777;border-right:none;background:#333337"></div>
<div class="a" style="left:1818px;top:216px;width:2px;height:28px;background:#777"></div>
<div class="mo" style="left:1723px;top:222.5px">Setting</div>
<div class="mo" style="left:1825px;top:222.5px">Value</div>
<div class="a" style="left:1717px;top:245.5px;width:100px;height:22px;background:#252528"></div>
<div class="a" style="left:1818px;top:245.5px;width:73px;height:22px;background:#252528"></div>
<div class="mo" style="left:1723px;top:249px">Algorithm</div>
<div class="mo" style="left:1824px;top:249px">hil...</div>
<div class="mo" style="left:1747px;top:272px;font-weight:bold;transform:translateY(1.5px) scaleY(1.1)">Domain</div>
<div class="mo" style="left:1747px;top:368px;font-weight:bold;transform:translateY(1.5px) scaleY(1.1)">Algorithm ...</div>
<svg style="left:1700px;top:260px" width="30" height="140"><path d="M24 26.5 H35 V15.5Z M24 122.5 H35 V111.5Z" fill="#c0c0c0"/></svg>
<div class="a" style="left:1741px;top:293px;width:76px;height:23px;background:#252528"></div><div class="a" style="left:1818px;top:293px;width:73px;height:23px;background:#252528"></div>
<div class="a" style="left:1741px;top:317px;width:76px;height:23px;background:#252528"></div><div class="a" style="left:1818px;top:317px;width:73px;height:23px;background:#252528"></div>
<div class="a" style="left:1741px;top:341px;width:76px;height:23px;background:#252528"></div><div class="a" style="left:1818px;top:341px;width:73px;height:23px;background:#252528"></div>
<div class="a" style="left:1741px;top:389px;width:76px;height:23px;background:#252528"></div><div class="a" style="left:1818px;top:389px;width:73px;height:23px;background:#252528"></div>
<div class="a" style="left:1741px;top:413px;width:76px;height:23px;background:#252528"></div><div class="a" style="left:1818px;top:413px;width:73px;height:23px;background:#252528"></div>
<div class="a" style="left:1741px;top:437px;width:76px;height:22px;background:#252528"></div><div class="a" style="left:1818px;top:437px;width:73px;height:22px;background:#252528"></div>
<div class="mo" style="left:1747px;top:296.5px;color:#8a8a8a">Scope</div>
<div class="mo" style="left:1824px;top:296.5px;color:#8a8a8a">pix...</div>
<div class="mo" style="left:1747px;top:320.5px">Cond...</div>
<div class="mo" style="left:1824px;top:320.5px">---</div>
<div class="mo" style="left:1747px;top:344.5px">Map</div>
<div class="mo" style="left:1824px;top:344.5px">Fro...</div>
<div class="mo" style="left:1747px;top:392.5px">Azim...</div>
<div class="mo" style="left:1824px;top:392.5px">315</div>
<div class="mo" style="left:1747px;top:416.5px">Alti...</div>
<div class="mo" style="left:1824px;top:416.5px">45</div>
<div class="mo" style="left:1747px;top:440.5px">Z-fa...</div>
<div class="mo" style="left:1824px;top:440.5px">1</div>
<!-- v scrollbar -->
<div class="a" style="left:1891px;top:245.5px;width:26px;height:213px;background:#3e3e42"></div>
<div class="thumb" style="left:1895px;top:271px;width:18px;height:57px"></div>
<svg style="left:1890px;top:245px" width="30" height="215"><path d="M6 17 H20 L13 9.5Z M6 198.5 H20 L13 206Z" fill="#9a9a9a"/></svg>
<div class="a" style="left:1717px;top:464.5px;width:200px;height:1px;background:#4a4a4e"></div>

<div class="a" style="left:1714px;top:546px;width:206px;height:6px;background:#6a6a6a"></div>
<!-- IMAGE OBJECT INFORMATION -->

<div class="vs" style="left:1710px;top:551px;width:3px;height:493px;background-position:0 -430px"></div>
<div class="t" style="left:1444px;top:557.5px">Image Object Infor<span class="el">...</span></div>
<svg style="left:1620px;top:550px" width="100" height="36">
 <path d="M13 15.5 H26 L19.5 22.5Z" fill="#b8b8b8"/>
 <g transform="translate(41,11.5)" fill="#c8c8c8"><path d="M1.8 0 H9 V7.2 H1.8Z M3.3 1.3 V7.2 H6 V1.3Z" fill-rule="evenodd"/><rect x="0" y="7" width="10.8" height="1.8"/><rect x="4.8" y="8.8" width="1.3" height="4.2"/></g>
 <path d="M68 13 L78 23 M78 13 L68 23" stroke="#c0c0c0" stroke-width="2"/>
</svg>
<div class="a" style="left:1440px;top:585.5px;width:268px;height:431px;border:1px solid #777777;background:#2b2b2e"></div>
<div class="a" style="left:1443.5px;top:588.5px;width:261.5px;height:426.5px;border:1px solid #777777;background:#28282b"></div>
<div class="a" style="left:1444.5px;top:589.5px;width:259.5px;height:28px;background:#333337;border-bottom:1px solid #777777"></div>
<div class="t" style="left:1451px;top:594.5px">Feature</div>
<div class="a" style="left:1444.5px;top:619px;width:259.5px;height:27.5px;background:#42414f"></div>
<div class="t" style="left:1445px;top:622px;font-weight:bold;font-size:18px;line-height:18px">Selectable features</div>
<div class="t" style="left:1445px;top:649.5px">No Feature or Object selected</div>
<div class="sbt" style="left:1444px;top:988px;width:260.5px;height:26px"></div>
<div class="thumb" style="left:1470px;top:992px;width:121px;height:18px"></div>
<svg style="left:1440px;top:985px" width="270" height="32"><path d="M13 16 L21 10.5 V21.5Z M255 16 L247 10.5 V21.5Z" fill="#9a9a9a"/></svg>
<div class="a" style="left:1441px;top:1017px;width:86.5px;height:27px;border-right:1px solid #5a5a5a;border-left:1px solid #5a5a5a;background:#28282b"></div>
<div class="t" style="left:1450.5px;top:1021.5px;color:#1ba1f0">Features</div>
<div class="t" style="left:1538px;top:1021.5px">Classifi<span class="el">...</span></div>
<div class="t" style="left:1626px;top:1021.5px">Class E<span class="el">...</span></div>

<!-- narrow collapsed column -->
<div class="a" style="left:1713px;top:551px;width:20px;height:493px;background:#2b2b2e"></div>
<div class="a" style="left:1714px;top:586px;width:13px;height:430px;border:1px solid #777777"></div>
<div class="a" style="left:1717px;top:589px;width:7px;height:424px;border:1px solid #777777"></div>
<div class="vs" style="left:1729px;top:551px;width:3px;height:493px;background-position:0 -430px"></div>
<svg style="left:1710px;top:560px" width="24" height="460">
 <path d="M8.5 5 L4.5 10 L8.5 15" fill="none" stroke="#c0c0c0" stroke-width="1.8"/>
 <path d="M8 435 V448 L13.5 441.5Z" fill="#8a8a8a"/>
</svg>

<!-- FEATURE VIEW -->
<div class="a" style="left:1733px;top:551px;width:187px;height:493px;background:#2b2b2e"></div>
<div class="t" style="left:1737.5px;top:559px">Feature V<span class="el">...</span></div>
<svg style="left:1830px;top:550px" width="90" height="36">
 <path d="M16 16 H27.5 L21.7 23Z" fill="#b8b8b8"/>
 <g transform="translate(43,12)" fill="#c8c8c8"><path d="M1.8 0 H9 V7.2 H1.8Z M3.3 1.3 V7.2 H6 V1.3Z" fill-rule="evenodd"/><rect x="0" y="7" width="10.8" height="1.8"/><rect x="4.8" y="8.8" width="1.3" height="4.2"/></g>
 <path d="M71 13.5 L81 23.5 M81 13.5 L71 23.5" stroke="#c0c0c0" stroke-width="2"/>
</svg>
<div class="a" style="left:1733px;top:586px;width:186px;height:33px;border:1.5px solid #777777;background:#28282b"></div>
<div class="t" style="left:1741px;top:592.5px;color:#8a8a8a">Search feature</div>
<svg style="left:1885px;top:588px" width="35" height="30">
 <circle cx="20.5" cy="11.5" r="6.5" fill="none" stroke="#1a7fc8" stroke-width="2.4"/>
 <path d="M15.5 16.5 L9 23.5" stroke="#1a7fc8" stroke-width="3" stroke-linecap="round"/>
</svg>
<div class="a" style="left:1733px;top:619px;width:187px;height:401px;background:#28282b;border-left:1.5px solid #777777;border-top:1.5px solid #777777"></div>
<svg style="left:1735px;top:620px" width="185" height="185"><path d="M14.5 14 V170" stroke="#8a8a8a" stroke-width="1" stroke-dasharray="1 2"/></svg>
<svg style="left:1735px;top:620px" width="60" height="185"><rect x="8.5" y="7.5" width="12.5" height="13" fill="#dcdcdc" stroke="#808080" stroke-width="1"/><path d="M10.5 14.0 H19 M14.75 10.0 V18.0" stroke="#2a4a9a" stroke-width="1.3"/><path d="M21.5 14.0 H29" stroke="#8a8a8a" stroke-dasharray="1 2"/><rect x="8.5" y="33.5" width="12.5" height="13" fill="#dcdcdc" stroke="#808080" stroke-width="1"/><path d="M10.5 40.0 H19 M14.75 36.0 V44.0" stroke="#2a4a9a" stroke-width="1.3"/><path d="M21.5 40.0 H29" stroke="#8a8a8a" stroke-dasharray="1 2"/><rect x="8.5" y="60.0" width="12.5" height="13" fill="#dcdcdc" stroke="#808080" stroke-width="1"/><path d="M10.5 66.5 H19 M14.75 62.5 V70.5" stroke="#2a4a9a" stroke-width="1.3"/><path d="M21.5 66.5 H29" stroke="#8a8a8a" stroke-dasharray="1 2"/><rect x="8.5" y="85.9" width="12.5" height="13" fill="#dcdcdc" stroke="#808080" stroke-width="1"/><path d="M10.5 92.4 H19 M14.75 88.4 V96.4" stroke="#2a4a9a" stroke-width="1.3"/><path d="M21.5 92.4 H29" stroke="#8a8a8a" stroke-dasharray="1 2"/><rect x="8.5" y="111.8" width="12.5" height="13" fill="#dcdcdc" stroke="#808080" stroke-width="1"/><path d="M10.5 118.3 H19 M14.75 114.3 V122.3" stroke="#2a4a9a" stroke-width="1.3"/><path d="M21.5 118.3 H29" stroke="#8a8a8a" stroke-dasharray="1 2"/><rect x="8.5" y="137.9" width="12.5" height="13" fill="#dcdcdc" stroke="#808080" stroke-width="1"/><path d="M10.5 144.4 H19 M14.75 140.4 V148.4" stroke="#2a4a9a" stroke-width="1.3"/><path d="M21.5 144.4 H29" stroke="#8a8a8a" stroke-dasharray="1 2"/><rect x="8.5" y="163.8" width="12.5" height="13" fill="#dcdcdc" stroke="#808080" stroke-width="1"/><path d="M10.5 170.3 H19 M14.75 166.3 V174.3" stroke="#2a4a9a" stroke-width="1.3"/><path d="M21.5 170.3 H29" stroke="#8a8a8a" stroke-dasharray="1 2"/>
<rect x="35.7" y="8.4" width="11" height="10.5" fill="#e8e6f5"/>
<rect x="35.7" y="34.4" width="11" height="10.5" fill="#e8e6f5"/>
<path d="M41.1 55.4 L50.4 55.4 L50.4 65.3 L41.1 74.3 L31.3 74.3 L31.3 65.3Z" fill="none" stroke="#e8e6f5" stroke-width="1.8"/>
<g fill="#c8202a"><circle cx="41.1" cy="55.4" r="2.6"/><circle cx="50.4" cy="55.4" r="2.6"/><circle cx="50.4" cy="65.3" r="2.6"/><circle cx="41.1" cy="74.3" r="2.6"/><circle cx="31.3" cy="74.3" r="2.6"/><circle cx="31.3" cy="65.3" r="2.6"/></g>
<path d="M34 98 C29 98 29 90 34.5 89.5 C34 83 42 80.5 45 85.5 C48 83 53 86 51.5 90.5 C55 91.5 54.5 98 50.5 98Z" fill="#3a3a48" stroke="#e8e6f5" stroke-width="2"/>
<g fill="#c8202a"><circle cx="39" cy="88.1" r="1.8"/><circle cx="34.7" cy="94" r="1.8"/><circle cx="45" cy="94" r="1.8"/></g>
<path d="M31 119 L40.5 113.5 L50.5 119 L40.5 126Z" fill="#5a5a66"/>
<path d="M31 116 L40.5 109 L50.5 115 L40.5 122Z" fill="#c8202a"/>
<path d="M32 115.5 L36 112.5 L38.5 116 L34.5 118.5Z M42.5 110.5 L46.5 108.5 L49 112 L45 114Z M44 117 L48 114.5 L49.5 117 L45.5 120Z M37 119.5 L40.5 117 L42.5 120.5 L39 122.5Z" fill="#f7b500"/>
<rect x="29.7" y="131.7" width="21.5" height="19.5" rx="2" fill="#e8e6f5" stroke="#707070" stroke-width="1.5"/>
<rect x="41" y="133" width="1.5" height="17" fill="#707070"/>
<path d="M31 137.5 H38 M31 142 H38 M31 146.7 H38" stroke="#c8202a" stroke-width="2.8"/>
<rect x="29" y="157" width="24" height="23.6" rx="2" fill="#e8e6f5"/>
<path d="M32.8 160.6 L38 160.6 L41 171.5 L44 160.6 L49.2 160.6 L43.5 177.4 L38.5 177.4Z" fill="#2b2b2e"/>
</svg>
<div class="t" style="left:1793.5px;top:623.4px;width:127px;overflow:hidden">Customized features</div>
<div class="t" style="left:1793.5px;top:649.4px;width:127px;overflow:hidden">Object features</div>
<div class="t" style="left:1793.5px;top:675.4px;width:127px;overflow:hidden">Vector features</div>
<div class="t" style="left:1793.5px;top:701.4px;width:127px;overflow:hidden">Point features (beta)</div>
<div class="t" style="left:1793.5px;top:727.4px;width:127px;overflow:hidden">Map features</div>
<div class="t" style="left:1793.5px;top:753.4px;width:127px;overflow:hidden">Project features</div>
<div class="t" style="left:1793.5px;top:779.4px;width:127px;overflow:hidden">Variables and Arrays</div>

<div class="sbt" style="left:1734px;top:1020px;width:186px;height:24px"></div>
<div class="thumb" style="left:1760px;top:1025px;width:81px;height:19px"></div>
<svg style="left:1734px;top:1020px" width="186" height="24"><path d="M10 13.5 L17 8.5 V18.5Z M176 13.5 L169 8.5 V18.5Z" fill="#9a9a9a"/></svg>

</body></html>
